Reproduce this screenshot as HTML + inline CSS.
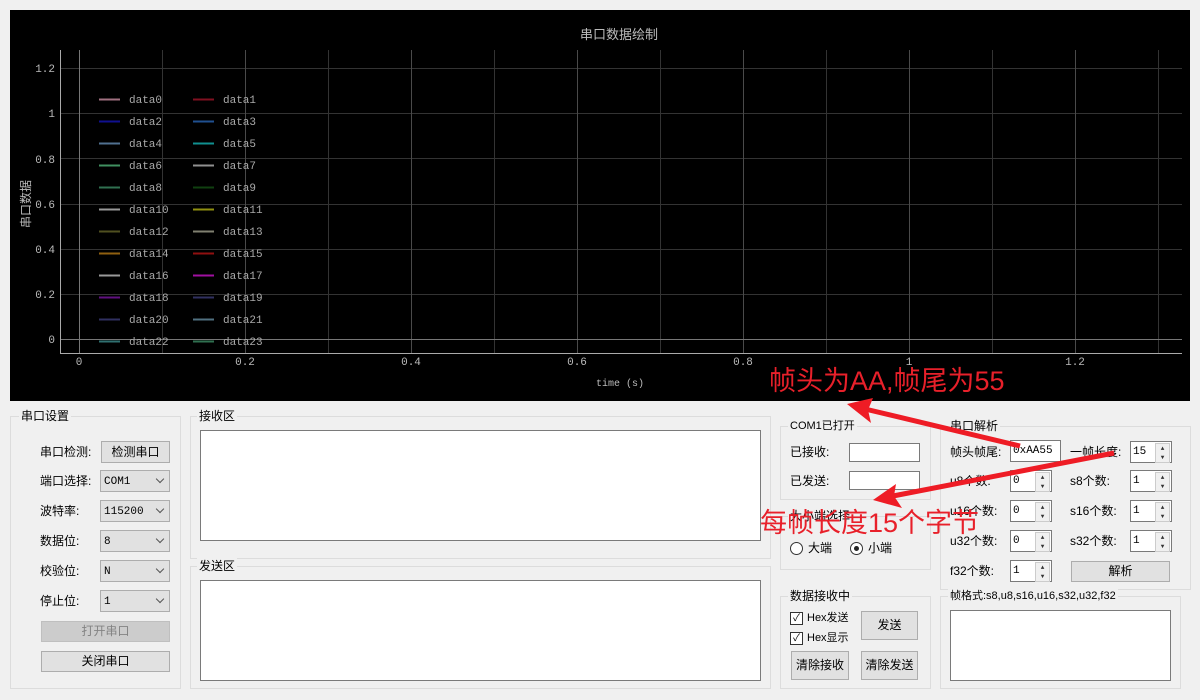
<!DOCTYPE html>
<html><head><meta charset="utf-8"><style>
*{box-sizing:border-box;margin:0;padding:0}
body{width:1200px;height:700px;background:#f0f0f0;position:relative;overflow:hidden;font-family:"Liberation Sans","Noto Sans CJK SC",sans-serif;font-size:12px;color:#000}
.a{position:absolute}
.grp{position:absolute;border:1px solid #dcdcdc}
.gt{position:absolute;top:-9px;left:8px;background:#f0f0f0;padding:0 2px;font-size:12px;line-height:16px}
.lbl{position:absolute;font-size:12px;line-height:16px}
.btn{position:absolute;background:#e1e1e1;border:1px solid #adadad;text-align:center;font-size:12px}
.cb{position:absolute;background:#e1e1e1;border:1px solid #adadad;font-family:"Liberation Mono",monospace;font-size:11px;padding-left:3px;padding-top:1px;line-height:20px}
.cb:after{content:"";position:absolute;right:6px;top:5px;width:5px;height:5px;border-right:1px solid #555;border-bottom:1px solid #555;transform:rotate(45deg)}
.ta{position:absolute;background:#fff;border:1px solid #7a7a7a}
.in{position:absolute;background:#fff;border:1px solid #7a7a7a;font-family:"Liberation Mono",monospace;font-size:11px;padding-left:2px;line-height:19px}
.sp{position:absolute;background:#fff;border:1px solid #7a7a7a;width:42px;height:22px;font-family:"Liberation Mono",monospace;font-size:11px;padding-left:2px;line-height:21px}
.sp:after{content:"▲\A▼";white-space:pre;position:absolute;right:1px;top:1px;width:13px;height:18px;background:#f0f0f0;border:1px solid #ccc;font-size:6px;line-height:9px;text-align:center;color:#333}
.red{position:absolute;color:#e8202a;font-family:"Liberation Sans","Noto Sans CJK SC",sans-serif;font-size:27px;line-height:30px;white-space:nowrap}
</style></head><body>
<svg class="a" style="left:0;top:0" width="1200" height="402">
<rect x="10" y="10" width="1180" height="391" fill="#000"/>
<g stroke="#333" stroke-width="1">
<line x1="60" y1="68.5" x2="1182" y2="68.5"/><line x1="60" y1="113.5" x2="1182" y2="113.5"/><line x1="60" y1="158.5" x2="1182" y2="158.5"/><line x1="60" y1="204.5" x2="1182" y2="204.5"/><line x1="60" y1="249.5" x2="1182" y2="249.5"/><line x1="60" y1="294.5" x2="1182" y2="294.5"/>
<line x1="162.5" y1="50" x2="162.5" y2="353"/><line x1="328.5" y1="50" x2="328.5" y2="353"/><line x1="494.5" y1="50" x2="494.5" y2="353"/><line x1="660.5" y1="50" x2="660.5" y2="353"/><line x1="826.5" y1="50" x2="826.5" y2="353"/><line x1="992.5" y1="50" x2="992.5" y2="353"/><line x1="1158.5" y1="50" x2="1158.5" y2="353"/>
</g>
<g stroke="#4a4a4a">
<line x1="245.5" y1="50" x2="245.5" y2="353"/><line x1="411.5" y1="50" x2="411.5" y2="353"/><line x1="577.5" y1="50" x2="577.5" y2="353"/><line x1="743.5" y1="50" x2="743.5" y2="353"/><line x1="909.5" y1="50" x2="909.5" y2="353"/><line x1="1075.5" y1="50" x2="1075.5" y2="353"/>
</g>
<line x1="79.5" y1="50" x2="79.5" y2="353" stroke="#777"/>
<line x1="60" y1="339.5" x2="1182" y2="339.5" stroke="#777"/>
<line x1="60.5" y1="50" x2="60.5" y2="354" stroke="#aaa"/>
<line x1="60" y1="353.5" x2="1182" y2="353.5" stroke="#aaa"/>
<g fill="#bbb" font-family="Liberation Mono,monospace" font-size="11" text-anchor="end">
<text x="55" y="72">1.2</text><text x="55" y="117">1</text><text x="55" y="163">0.8</text><text x="55" y="208">0.6</text><text x="55" y="253">0.4</text><text x="55" y="298">0.2</text><text x="55" y="343">0</text>
</g>
<g fill="#bbb" font-family="Liberation Mono,monospace" font-size="11" text-anchor="middle">
<text x="79" y="365">0</text><text x="245" y="365">0.2</text><text x="411" y="365">0.4</text><text x="577" y="365">0.6</text><text x="743" y="365">0.8</text><text x="909" y="365">1</text><text x="1075" y="365">1.2</text>
<text x="620" y="386" font-size="10">time (s)</text>
</g>
<text x="619" y="39" fill="#bbb" font-size="13" text-anchor="middle" font-family="Noto Sans CJK SC,sans-serif">串口数据绘制</text>
<text transform="translate(30,204) rotate(-90)" fill="#bbb" font-size="12" text-anchor="middle" font-family="Noto Sans CJK SC,sans-serif">串口数据</text>
<g stroke-width="2">
<line x1="99" y1="99.5" x2="120" y2="99.5" stroke="#a07080"/><line x1="193" y1="99.5" x2="214" y2="99.5" stroke="#801020"/>
<line x1="99" y1="121.5" x2="120" y2="121.5" stroke="#101090"/><line x1="193" y1="121.5" x2="214" y2="121.5" stroke="#205090"/>
<line x1="99" y1="143.5" x2="120" y2="143.5" stroke="#507090"/><line x1="193" y1="143.5" x2="214" y2="143.5" stroke="#109090"/>
<line x1="99" y1="165.5" x2="120" y2="165.5" stroke="#409060"/><line x1="193" y1="165.5" x2="214" y2="165.5" stroke="#909090"/>
<line x1="99" y1="187.5" x2="120" y2="187.5" stroke="#307050"/><line x1="193" y1="187.5" x2="214" y2="187.5" stroke="#104010"/>
<line x1="99" y1="209.5" x2="120" y2="209.5" stroke="#999"/><line x1="193" y1="209.5" x2="214" y2="209.5" stroke="#909010"/>
<line x1="99" y1="231.5" x2="120" y2="231.5" stroke="#505020"/><line x1="193" y1="231.5" x2="214" y2="231.5" stroke="#808070"/>
<line x1="99" y1="253.5" x2="120" y2="253.5" stroke="#906010"/><line x1="193" y1="253.5" x2="214" y2="253.5" stroke="#901010"/>
<line x1="99" y1="275.5" x2="120" y2="275.5" stroke="#999"/><line x1="193" y1="275.5" x2="214" y2="275.5" stroke="#a010a0"/>
<line x1="99" y1="297.5" x2="120" y2="297.5" stroke="#601080"/><line x1="193" y1="297.5" x2="214" y2="297.5" stroke="#303060"/>
<line x1="99" y1="319.5" x2="120" y2="319.5" stroke="#303060"/><line x1="193" y1="319.5" x2="214" y2="319.5" stroke="#507080"/>
<line x1="99" y1="341.5" x2="120" y2="341.5" stroke="#307070"/><line x1="193" y1="341.5" x2="214" y2="341.5" stroke="#307050"/>
</g>
<g fill="#aaa" font-family="Liberation Mono,monospace" font-size="11">
<text x="129" y="103">data0</text><text x="223" y="103">data1</text>
<text x="129" y="125">data2</text><text x="223" y="125">data3</text>
<text x="129" y="147">data4</text><text x="223" y="147">data5</text>
<text x="129" y="169">data6</text><text x="223" y="169">data7</text>
<text x="129" y="191">data8</text><text x="223" y="191">data9</text>
<text x="129" y="213">data10</text><text x="223" y="213">data11</text>
<text x="129" y="235">data12</text><text x="223" y="235">data13</text>
<text x="129" y="257">data14</text><text x="223" y="257">data15</text>
<text x="129" y="279">data16</text><text x="223" y="279">data17</text>
<text x="129" y="301">data18</text><text x="223" y="301">data19</text>
<text x="129" y="323">data20</text><text x="223" y="323">data21</text>
<text x="129" y="345">data22</text><text x="223" y="345">data23</text>
</g>
</svg>

<div class="grp" style="left:10px;top:416px;width:171px;height:273px"><div class="gt">串口设置</div></div>
<div class="lbl" style="left:40px;top:444px">串口检测:</div>
<div class="btn" style="left:101px;top:441px;width:69px;height:22px;line-height:20px">检测串口</div>
<div class="lbl" style="left:40px;top:473px">端口选择:</div><div class="cb" style="left:100px;top:470px;width:70px;height:22px">COM1</div>
<div class="lbl" style="left:40px;top:503px">波特率:</div><div class="cb" style="left:100px;top:500px;width:70px;height:22px">115200</div>
<div class="lbl" style="left:40px;top:533px">数据位:</div><div class="cb" style="left:100px;top:530px;width:70px;height:22px">8</div>
<div class="lbl" style="left:40px;top:563px">校验位:</div><div class="cb" style="left:100px;top:560px;width:70px;height:22px">N</div>
<div class="lbl" style="left:40px;top:593px">停止位:</div><div class="cb" style="left:100px;top:590px;width:70px;height:22px">1</div>
<div class="btn" style="left:41px;top:621px;width:129px;height:21px;line-height:19px;background:#ccc;border-color:#bfbfbf;color:#838383">打开串口</div>
<div class="btn" style="left:41px;top:651px;width:129px;height:21px;line-height:19px">关闭串口</div>

<div class="grp" style="left:190px;top:416px;width:581px;height:143px"><div class="gt" style="left:6px">接收区</div></div>
<div class="ta" style="left:200px;top:430px;width:561px;height:111px"></div>
<div class="grp" style="left:190px;top:566px;width:581px;height:123px"><div class="gt" style="left:6px">发送区</div></div>
<div class="ta" style="left:200px;top:580px;width:561px;height:101px"></div>

<div class="grp" style="left:780px;top:426px;width:151px;height:74px"><div class="gt" style="left:7px;font-size:11px">COM1已打开</div></div>
<div class="lbl" style="left:790px;top:444px">已接收:</div><div class="in" style="left:849px;top:443px;width:71px;height:19px"></div>
<div class="lbl" style="left:790px;top:473px">已发送:</div><div class="in" style="left:849px;top:471px;width:71px;height:19px"></div>
<div class="grp" style="left:780px;top:516px;width:151px;height:54px"><div class="gt" style="left:7px">大小端选择</div></div>
<div class="a" style="left:790px;top:542px;width:13px;height:13px;border:1px solid #333;border-radius:50%;background:#fff"></div>
<div class="lbl" style="left:808px;top:540px">大端</div>
<div class="a" style="left:850px;top:542px;width:13px;height:13px;border:1px solid #333;border-radius:50%;background:#fff"><div class="a" style="left:3px;top:3px;width:5px;height:5px;border-radius:50%;background:#222"></div></div>
<div class="lbl" style="left:868px;top:540px">小端</div>

<div class="grp" style="left:780px;top:596px;width:151px;height:93px"><div class="gt" style="left:7px">数据接收中</div></div>
<div class="a" style="left:790px;top:612px;width:13px;height:13px;border:1px solid #333;background:#fff;font-size:10px;line-height:11px;text-align:center">✓</div>
<div class="lbl" style="left:807px;top:610px;font-size:11px">Hex发送</div>
<div class="a" style="left:790px;top:632px;width:13px;height:13px;border:1px solid #333;background:#fff;font-size:10px;line-height:11px;text-align:center">✓</div>
<div class="lbl" style="left:807px;top:630px;font-size:11px">Hex显示</div>
<div class="btn" style="left:861px;top:611px;width:57px;height:29px;line-height:27px">发送</div>
<div class="btn" style="left:791px;top:651px;width:58px;height:29px;line-height:27px">清除接收</div>
<div class="btn" style="left:861px;top:651px;width:57px;height:29px;line-height:27px">清除发送</div>

<div class="grp" style="left:940px;top:426px;width:251px;height:164px"><div class="gt" style="left:7px">串口解析</div></div>
<div class="lbl" style="left:950px;top:444px">帧头帧尾:</div><div class="in" style="left:1010px;top:440px;width:51px;height:22px;line-height:20px">0xAA55</div>
<div class="lbl" style="left:1070px;top:444px">一帧长度:</div><div class="sp" style="left:1130px;top:441px">15</div>
<div class="lbl" style="left:950px;top:473px">u8个数:</div><div class="sp" style="left:1010px;top:470px">0</div>
<div class="lbl" style="left:1070px;top:473px">s8个数:</div><div class="sp" style="left:1130px;top:470px">1</div>
<div class="lbl" style="left:950px;top:503px">u16个数:</div><div class="sp" style="left:1010px;top:500px">0</div>
<div class="lbl" style="left:1070px;top:503px">s16个数:</div><div class="sp" style="left:1130px;top:500px">1</div>
<div class="lbl" style="left:950px;top:533px">u32个数:</div><div class="sp" style="left:1010px;top:530px">0</div>
<div class="lbl" style="left:1070px;top:533px">s32个数:</div><div class="sp" style="left:1130px;top:530px">1</div>
<div class="lbl" style="left:950px;top:563px">f32个数:</div><div class="sp" style="left:1010px;top:560px">1</div>
<div class="btn" style="left:1071px;top:561px;width:99px;height:21px;line-height:19px">解析</div>
<div class="grp" style="left:940px;top:596px;width:241px;height:93px"><div class="gt" style="left:7px;font-size:11px">帧格式:s8,u8,s16,u16,s32,u32,f32</div></div>
<div class="ta" style="left:950px;top:610px;width:221px;height:71px"></div>

<svg class="a" style="left:0;top:0" width="1200" height="700">
<g stroke="#ee1c25" stroke-width="5" fill="#ee1c25">
<line x1="1020" y1="446" x2="865" y2="409"/>
<polygon stroke="none" points="847,404 873,398 868,410 871,423"/>
<line x1="1114" y1="453" x2="893" y2="496"/>
<polygon stroke="none" points="873,500 896,484 894,496 902,508"/>
</g>
</svg>
<div class="red" style="left:769px;top:366px">帧头为AA,帧尾为55</div>
<div class="red" style="left:760px;top:508px">每帧长度15个字节</div>
</body></html>
